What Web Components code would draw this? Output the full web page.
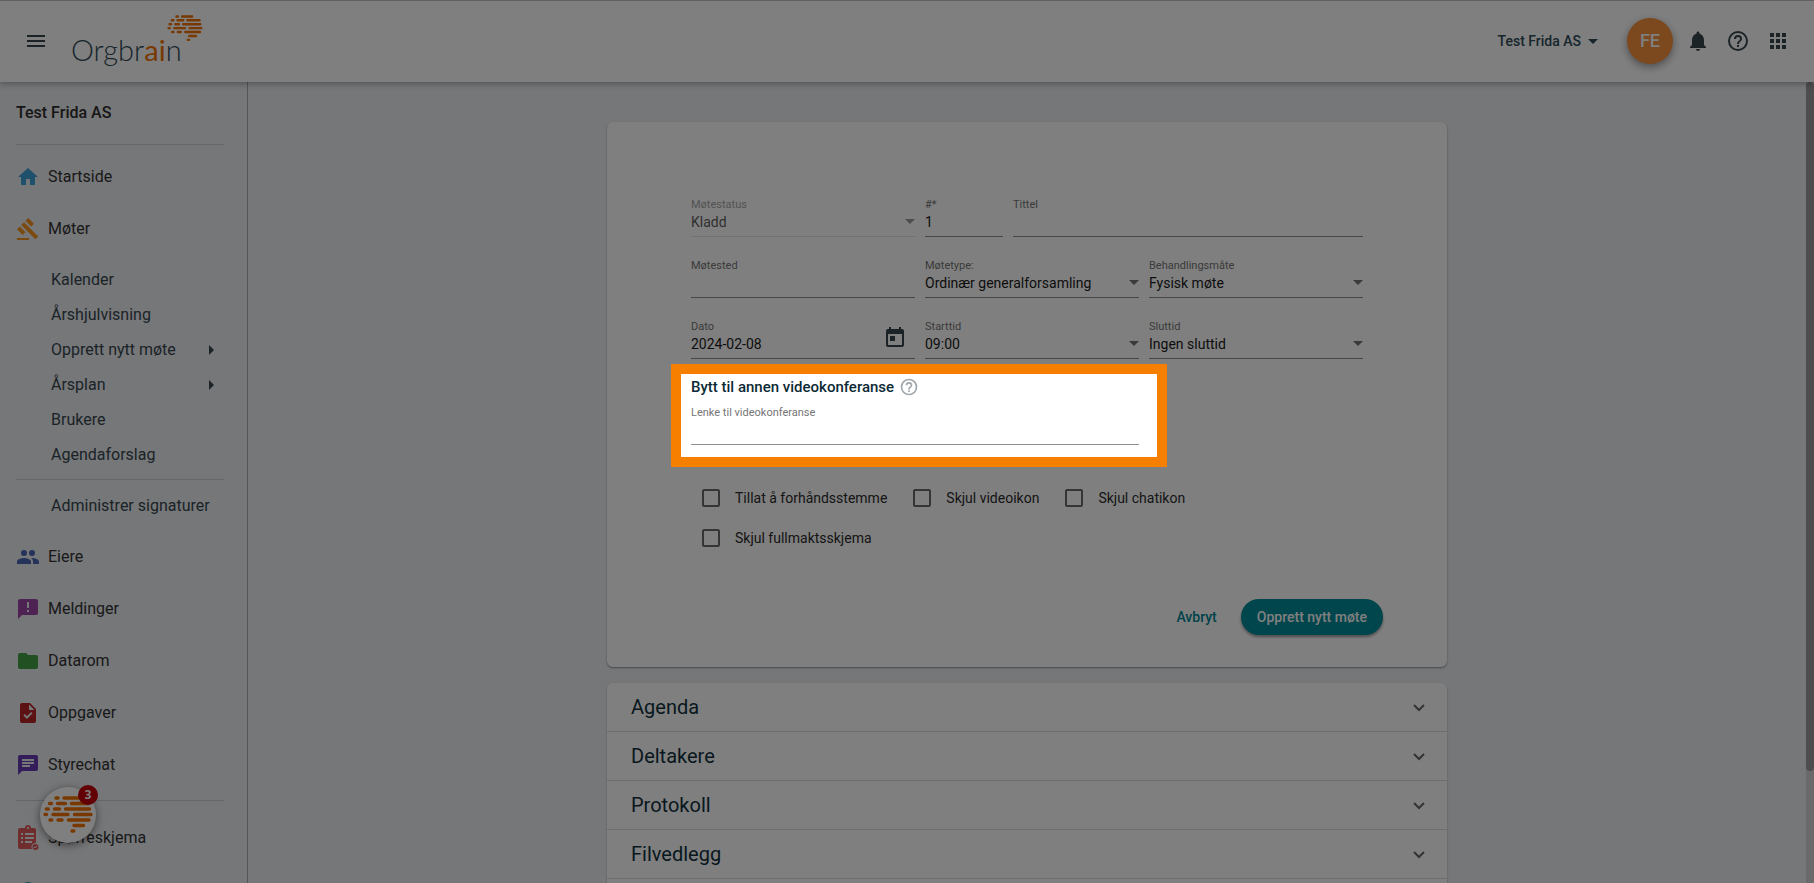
<!DOCTYPE html>
<html lang="nb">
<head>
<meta charset="utf-8">
<title>Orgbrain – Opprett nytt møte</title>
<style>
html,body{margin:0;height:100%;overflow:hidden}
body{font:14px/20px Roboto,"Liberation Sans",sans-serif;color:#1d1d1d;background:#eceef2}
</style>
</head>
<body>
<org-app></org-app>

<script>
const define = (name, html, setup) => customElements.define(name, class extends HTMLElement {
  constructor() {
    super();
    const t = document.createElement('template');
    t.innerHTML = html;
    this.attachShadow({mode: 'open'}).append(t.content.cloneNode(true));
  }
  connectedCallback() {
    if (setup && !this.ready) { this.ready = true; setup(this, this.shadowRoot); }
  }
});

const ICONS = {
  menu: '<path d="M3 18h18v-2H3zm0-5h18v-2H3zm0-7v2h18V6z"/>',
  bell: '<path d="M12 22c1.100 0 2-.9 2-2h-4c0 1.100.9 2 2 2zm6-6v-5c0-3.070-1.630-5.640-4.500-6.320V4c0-.83-.67-1.500-1.500-1.500s-1.500.67-1.500 1.500v.68C7.640 5.360 6 7.920 6 11v5l-2 2v1h16v-1z"/>',
  help: '<path d="M11 18h2v-2h-2zm1-16a10 10 0 1 0 0 20 10 10 0 0 0 0-20zm0 18a8 8 0 1 1 0-16 8 8 0 0 1 0 16zm0-14a4 4 0 0 0-4 4h2a2 2 0 1 1 4 0c0 2-3 1.750-3 5h2c0-2.250 3-2.500 3-5a4 4 0 0 0-4-4z"/>',
  apps: '<path d="M4 8h4V4H4zm6 12h4v-4h-4zm-6 0h4v-4H4zm0-6h4v-4H4zm6 0h4v-4h-4zm6-10v4h4V4zm-6 4h4V4h-4zm6 6h4v-4h-4zm0 6h4v-4h-4z"/>',
  home: '<path d="M10 20v-6h4v6h5v-8h3L12 3 2 12h3v8z"/>',
  gavel: '<path d="M1 21h12v2H1zM5.240 8.070l2.830-2.830 14.140 14.140-2.830 2.830zM12.320 1l5.660 5.660-2.830 2.830-5.660-5.660zM3.830 9.480l5.660 5.660-2.830 2.830L1 12.310z"/>',
  people: '<path d="M16 11a3 3 0 1 0 0-6 3 3 0 0 0 0 6zm-8 0a3 3 0 1 0 0-6 3 3 0 0 0 0 6zm0 2c-2.330 0-7 1.170-7 3.500V19h14v-2.500C15 14.170 10.330 13 8 13zm8 0c-.29 0-.62.020-.97.050 1.160.84 1.970 1.970 1.970 3.450V19h6v-2.500c0-2.330-4.670-3.500-7-3.500z"/>',
  alert: '<path d="M20 2H4a2 2 0 0 0-2 2v18l4-4h14a2 2 0 0 0 2-2V4a2 2 0 0 0-2-2zm-7 13h-2v-2h2zm0-4h-2V5h2z"/>',
  folder: '<path d="M10 4H4a2 2 0 0 0-2 2v12a2 2 0 0 0 2 2h16a2 2 0 0 0 2-2V8a2 2 0 0 0-2-2h-8z"/>',
  task: '<path d="M14 2H6a2 2 0 0 0-2 2v16a2 2 0 0 0 2 2h12a2 2 0 0 0 2-2V8zm-3.060 16L7.400 14.460l1.410-1.410 2.120 2.120 4.240-4.240 1.410 1.410zM13 9V3.500L18.500 9z"/>',
  chat: '<path d="M20 2H4a2 2 0 0 0-2 2v18l4-4h14a2 2 0 0 0 2-2V4a2 2 0 0 0-2-2zM6 6h12v2H6zm0 3h12v2H6zm8 5H6v-2h8z"/>',
  survey: '<path fill-rule="evenodd" d="M4 2h5a3 3 0 0 1 6 0h3a2 2 0 0 1 2 2v13a4 4 0 0 0-4 6H4a2 2 0 0 1-2-2V4a2 2 0 0 1 2-2zm8-1a1 1 0 1 0 0 2 1 1 0 0 0 0-2zM5 7v2h2V7zm4 0v2h9V7zM5 11v2h2v-2zm4 0v2h9v-2zM5 15v2h2v-2zm4 0v2h7v-2z"/><circle cx="19.500" cy="21" r="3"/><path d="M18 21l1 1 2-2" stroke="#eceef2" fill="none"/>',
  gear: '<circle cx="12" cy="12" r="8"/>',
  calendar: '<path d="M19 3h-1V1h-2v2H8V1H6v2H5a2 2 0 0 0-2 2v14a2 2 0 0 0 2 2h14a2 2 0 0 0 2-2V5a2 2 0 0 0-2-2zm0 16H5V8h14zM7 10h5v5H7z"/>',
  down: '<path d="M7 10l5 5 5-5z"/>',
  right: '<path d="M9 17l5-5-5-5z"/>',
  chevron: '<path d="M7 10l5 5 5-5" fill="none" stroke="currentColor" stroke-width="2"/>'
};

define('org-icon', `<style>
:host{display:block;flex:none;width:24px;height:24px}
svg{display:block;width:100%;height:100%;fill:currentColor;overflow:visible}
</style><svg viewBox="0 0 24 24" aria-hidden="true"></svg>`,
(el, root) => { root.querySelector('svg').innerHTML = ICONS[el.getAttribute('name')]; });

define('org-brain', `<style>
:host{display:block}
svg{display:block;width:100%;height:100%;overflow:visible}
</style><svg viewBox="0 0 50 38" fill="none" stroke="#f07000" stroke-width="3.400" stroke-linecap="round" aria-hidden="true">
<path d="M13 2h2M21 2h14M6.500 7.500h2M14.500 7.500h8M28.500 7.500h17M3.300 13h2M11.500 13h5M22.500 13h24M2 18.500h1.500M10 18.500h15M31.500 18.500h16.500M7 24h1.800M15 24h4M25.500 24h20.500M31 29.500h9.500M29 35h1.800"/></svg>`);

define('org-header', `<style>
:host{display:flex;align-items:center;box-sizing:border-box;height:82px;padding:0 24px 0 19px;background:#fff;box-shadow:inset 0 1px #c0c0c0,0 2px 6px rgba(0,0,0,.3);position:relative;z-index:2;color:#37474f}
button{border:0;background:none;padding:0;font:inherit;color:inherit;display:flex;align-items:center;justify-content:center}
.icon{width:24px;height:24px}
.menu{margin:0 23px 0 5px}
.logo{position:relative;color:#2f4a58;text-decoration:none;font:300 29px/40px Lato,sans-serif;margin-top:18px}
.logo b{font-weight:400;color:#f07000}
org-brain{position:absolute;left:96px;top:-15px;width:36px;height:27px}
.right{margin-left:auto;display:flex;align-items:center;gap:16px}
.org{font-weight:500;color:#2f4a58;margin-right:6px}
.avatar{width:46px;height:46px;border-radius:50%;background:#f8913a;color:#fff;font-size:18px;font-weight:500;box-shadow:0 3px 8px rgba(0,0,0,.4);margin-right:-3px}
</style>
<button class="icon menu" aria-label="Meny"><org-icon name="menu"></org-icon></button>
<a class="logo" href="#">Orgbr<b>ai</b>n<org-brain></org-brain></a>
<div class="right">
<button class="org">Test Frida AS<org-icon name="down"></org-icon></button>
<button class="avatar">FE</button>
<button class="icon" aria-label="Varsler"><org-icon name="bell"></org-icon></button>
<button class="icon" aria-label="Hjelp"><org-icon name="help"></org-icon></button>
<button class="icon" aria-label="Apper"><org-icon name="apps"></org-icon></button>
</div>`);

define('nav-item', `<style>
:host{display:block}
a{display:flex;align-items:center;gap:8px;height:52px;color:#333;text-decoration:none;font:400 16px/24px Roboto,sans-serif}
:host([sub]) a{height:35px;padding-left:35px;color:#37474f}
:host([sub]) org-icon{margin-left:auto}
</style><a href="#"></a>`,
(el, root) => {
  const a = root.querySelector('a'), icon = el.getAttribute('icon');
  a.innerHTML = el.hasAttribute('sub')
    ? '<span><slot></slot></span>' + (icon ? `<org-icon name="${icon}"></org-icon>` : '')
    : `<org-icon name="${icon}" style="color:${el.getAttribute('tint')}"></org-icon><span><slot></slot></span>`;
});

define('org-sidebar', `<style>
:host{display:block;box-sizing:border-box;width:248px;flex:none;padding:0 23px 0 16px;border-right:1px solid #a8aaad}
h2{margin:0;padding:19px 0;font:500 16px/24px Roboto,sans-serif;color:#2c2c2c}
hr{border:0;height:1px;margin:0;background:#ccced2}
.top{padding-top:6px}
.sub{padding:7px 0}
.low{padding:8px 0}
.end{padding:9px 0 11px}
</style>
<h2>Test Frida AS</h2><hr>
<nav aria-label="Hovedmeny">
<div class="top"><nav-item icon="home" tint="#3fa0d8">Startside</nav-item><nav-item icon="gavel" tint="#f7941d">Møter</nav-item></div>
<div class="sub">
<nav-item sub>Kalender</nav-item><nav-item sub>Årshjulvisning</nav-item>
<nav-item sub icon="right">Opprett nytt møte</nav-item><nav-item sub icon="right">Årsplan</nav-item>
<nav-item sub>Brukere</nav-item><nav-item sub>Agendaforslag</nav-item></div>
<hr>
<div class="low"><nav-item sub>Administrer signaturer</nav-item></div>
<nav-item icon="people" tint="#4a66b5">Eiere</nav-item>
<nav-item icon="alert" tint="#9c45a5">Meldinger</nav-item>
<nav-item icon="folder" tint="#43a047">Datarom</nav-item>
<nav-item icon="task" tint="#b92525">Oppgaver</nav-item>
<nav-item icon="chat" tint="#673ab7">Styrechat</nav-item>
<div class="end"><hr></div>
<nav-item icon="survey" tint="#e05a5a">Spørreskjema</nav-item>
<nav-item icon="gear" tint="#2f8fa0"></nav-item>
</nav>`);

define('form-field', `<style>
:host{display:block;min-width:0}
.field{position:relative;box-sizing:border-box;height:41px;border-bottom:1px solid #8f8f8f;display:flex;flex-direction:column}
label{font-size:11px;line-height:14px;padding-top:2px;color:#757575}
input,select{appearance:none;width:100%;height:20px;border:0;padding:0;margin:0;background:none;font:14px/20px Roboto,sans-serif;color:#1a1a1a;outline:0;border-radius:0;opacity:1}
.end{position:absolute;color:#757575;pointer-events:none}
.caret{right:-7px;top:13px}
.date{right:8px;top:8px;color:#37474f}
:host([disabled]) .field{border-color:#e4e4e4}
:host([disabled]) label{color:#a6a6a6}
:host([disabled]) :is(input,select){color:#616161}
:host([disabled]) .end{color:#9a9a9a}
</style><div class="field"></div>`,
(el, root) => {
  const v = el.getAttribute('value') || '', kind = el.getAttribute('kind');
  const dis = el.hasAttribute('disabled') ? 'disabled' : '';
  root.querySelector('.field').innerHTML = `<label for="c">${el.getAttribute('label')}</label>` +
    (kind === 'select' ? `<select id="c" ${dis}><option>${v}</option></select><org-icon class="end caret" name="down"></org-icon>`
    : `<input id="c" type="text" value="${v}" ${dis}>` + (kind === 'date' ? '<org-icon class="end date" name="calendar"></org-icon>' : ''));
});

define('check-option', `<style>
:host{display:block}
label{display:flex;align-items:center;height:40px;color:#2b2b2b}
input{appearance:none;box-sizing:border-box;width:18px;height:18px;margin:0 15px 0 11px;border:2px solid #6b6b6b;border-radius:2px}
</style><label><input type="checkbox"><span><slot></slot></span></label>`);

/* Dims the whole window except for the area it frames. */
define('tour-spotlight', `<style>
:host{display:block;position:absolute;z-index:10;pointer-events:none;border:10px solid #f77f00;box-shadow:0 0 0 4000px rgba(0,0,0,.5)}
</style>`);

define('meeting-form', `<style>
:host{display:block;box-sizing:border-box;background:#fff;border-radius:6px;box-shadow:0 1px 2px rgba(0,0,0,.4);padding:74px 84px 32px}
form{display:grid}
.row{display:grid;grid-template-columns:224px 1fr 1fr;gap:10px;margin-bottom:20px}
.first{grid-template-columns:224px 78px 1fr}
.dates{margin-bottom:18px}
.video{position:relative;width:448px}
.video h3{display:flex;align-items:center;gap:5px;margin:0 0 7px;height:20px;font:500 15px/20px Roboto,sans-serif;color:#0c2a35}
.video org-icon{width:20px;height:20px;color:#a3a8ac}
tour-spotlight{inset:-13px -28px -22px -20px}
.checks{display:flex;flex-wrap:wrap;column-gap:15px;margin-top:33px}
.actions{display:flex;justify-content:flex-end;gap:8px;margin:41px -20px 0 0}
button{height:36px;border:0;border-radius:18px;padding:0 16px;font:500 14px/36px Roboto,sans-serif;background:none;color:#008593}
.primary{background:#008c99;color:#fff;box-shadow:0 2px 3px rgba(0,0,0,.4)}
</style>
<form onsubmit="return false">
<div class="row first">
<form-field label="Møtestatus" kind="select" value="Kladd" disabled></form-field>
<form-field label="#*" value="1"></form-field>
<form-field label="Tittel"></form-field></div>
<div class="row">
<form-field label="Møtested"></form-field>
<form-field label="Møtetype:" kind="select" value="Ordinær generalforsamling"></form-field>
<form-field label="Behandlingsmåte" kind="select" value="Fysisk møte"></form-field></div>
<div class="row dates">
<form-field label="Dato" kind="date" value="2024-02-08"></form-field>
<form-field label="Starttid" kind="select" value="09:00"></form-field>
<form-field label="Sluttid" kind="select" value="Ingen sluttid"></form-field></div>
<div class="video">
<h3>Bytt til annen videokonferanse <org-icon name="help"></org-icon></h3>
<form-field label="Lenke til videokonferanse"></form-field>
<tour-spotlight></tour-spotlight></div>
<div class="checks">
<check-option>Tillat å forhåndsstemme</check-option><check-option>Skjul videoikon</check-option>
<check-option>Skjul chatikon</check-option><check-option>Skjul fullmaktsskjema</check-option></div>
<div class="actions"><button type="button">Avbryt</button><button class="primary" type="submit">Opprett nytt møte</button></div>
</form>`);

define('accordion-row', `<style>
:host{display:block;border-bottom:1px solid #dcdcdc}
button{display:flex;align-items:center;justify-content:space-between;width:100%;height:48px;border:0;padding:0 16px 0 24px;background:none;font:400 20px/28px Roboto,sans-serif;color:#10303c}
org-icon{color:#666}
</style><button aria-expanded="false"><span><slot></slot></span><org-icon name="chevron"></org-icon></button>`);

define('chat-launcher', `<style>
:host{display:block;position:fixed;left:40px;bottom:40px;width:56px;height:56px;z-index:3}
button{width:100%;height:100%;border:0;border-radius:50%;padding:0 3px;background:#fff;box-shadow:0 2px 8px rgba(0,0,0,.5)}
span{position:absolute;right:-2px;top:-2px;width:20px;height:20px;border-radius:50%;background:#c4000a;color:#fff;font:700 12px/20px "Open Sans",sans-serif;text-align:center}
</style><button aria-label="Åpne chat"><org-brain></org-brain></button><span>3</span>`);

define('org-app', `<style>
:host{display:flex;flex-direction:column;height:100vh;overflow:hidden}
.body{display:flex;flex:1;min-height:0}
main{flex:1;padding:40px 24px 0}
.column{max-width:840px;margin:0 auto;display:grid;gap:16px}
.list{background:#fff;border-radius:6px;box-shadow:0 1px 2px rgba(0,0,0,.3)}
.scroll{width:8px;flex:none;background:#d4d4d4}
.scroll i{display:block;height:86%;background:#9a9a9a;border-radius:4px}
</style>
<org-header></org-header>
<div class="body">
<org-sidebar></org-sidebar>
<main><div class="column">
<meeting-form></meeting-form>
<section class="list"><accordion-row>Agenda</accordion-row><accordion-row>Deltakere</accordion-row><accordion-row>Protokoll</accordion-row><accordion-row>Filvedlegg</accordion-row><accordion-row></accordion-row></section>
</div></main>
<div class="scroll"><i></i></div>
</div>
<chat-launcher></chat-launcher>`);
</script>
</body>
</html>
